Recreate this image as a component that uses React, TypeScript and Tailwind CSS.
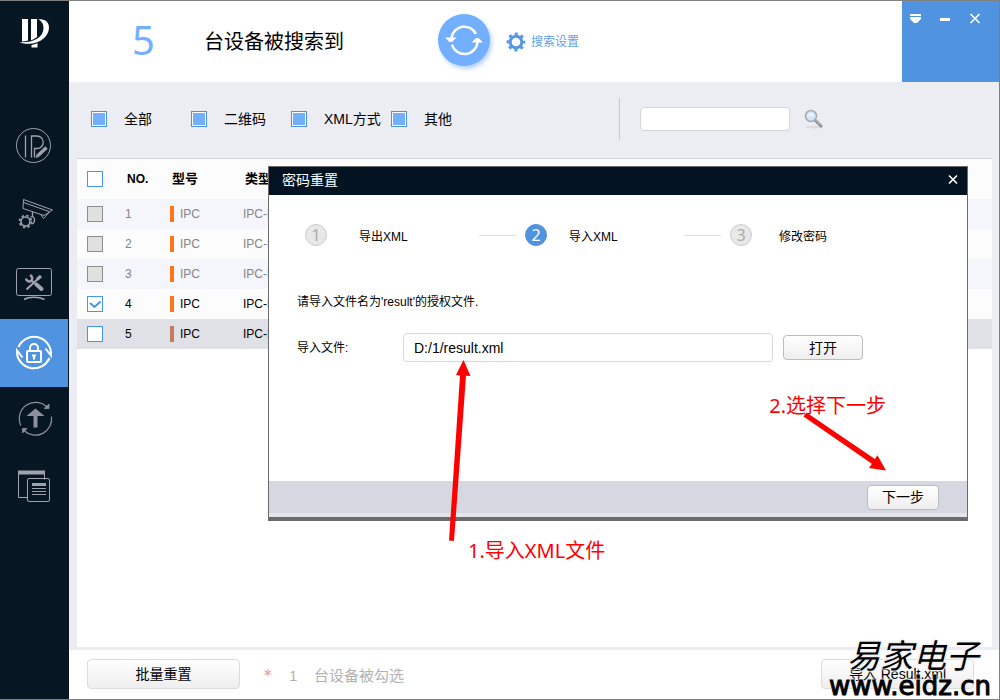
import { Fragment, type ReactNode } from 'react';

const filters = ['全部', '二维码', 'XML方式', '其他'];

const devices = [
  { no: 1, disabled: true, checked: false, row: 'bg-[#f5f6fb] text-[#858585]', bar: 'bg-[#ff7518]' },
  { no: 2, disabled: true, checked: false, row: 'bg-[#fcfcfc] text-[#858585]', bar: 'bg-[#ff7518]' },
  { no: 3, disabled: true, checked: false, row: 'bg-[#f5f6fb] text-[#858585]', bar: 'bg-[#ff7518]' },
  { no: 4, disabled: false, checked: true, row: 'bg-[#fcfcfc] text-black', bar: 'bg-[#ff7518]' },
  { no: 5, disabled: false, checked: false, row: 'bg-[#e0e1e7] text-black', bar: 'bg-[#c27b5c]' },
];

const steps = [
  { n: 1, label: '导出XML', active: false },
  { n: 2, label: '导入XML', active: true },
  { n: 3, label: '修改密码', active: false },
];

const buttonStyle =
  'border rounded bg-linear-to-b from-white to-[#eeeeee] text-sm leading-5 text-black flex items-center justify-center';

function Logo() {
  return (
    <svg className="w-[69px] h-[48px]" viewBox="0 0 69 48" fill="#fff">
      <path d="M22 18h6v21.500c-2 .6-4 .9-6 1z" />
      <path d="M31 18h6v18c-2 1.600-4 2.600-6 3.200z" />
      <path d="M38.500 18c7 .2 10.500 3 10.500 8.500 0 9-9 15.500-19 16.200-4 .2-7.500-.2-10.500-1.500 12 1 24-4 24-14.200 0-4-1.500-6.500-5-9z" />
      <path d="M31.500 44c2-.3 4-.9 6-1.800V46.500h-6z" />
    </svg>
  );
}

function IpEditIcon() {
  return (
    <svg className="size-[68px]" viewBox="0 0 68 68" fill="none" stroke="#a0a3ad">
      <circle cx="33.500" cy="30.500" r="17" />
      <path d="M25.500 20.500v22M31.500 42.500v-21.500h5.500a6 6 0 0 1 0 12.500h-2.500v9" strokeWidth="1.300" />
      <path d="M46.500 32.500L38 40.500" strokeWidth="3.400" />
      <path d="M36 42.500l.8-3 2 2.200z" fill="#a0a3ad" strokeWidth=".6" />
    </svg>
  );
}

function CameraIcon() {
  return (
    <svg className="size-[68px]" viewBox="0 0 68 68" fill="none" stroke="#a0a3ad">
      <path d="M23.500 16.500l29 10.500-8.500 5.500-21-7z" />
      <path d="M23.500 19.500L49 28.500M49 29.500l-5.500 6-2.500-3.500" />
      <path d="M32.500 29v5M30.500 34c2.500-1 4.500.8 4 3.500-.3 2.500-1.500 3.500-3 3.500" strokeWidth="1.300" />
      <circle cx="25.500" cy="38.500" r="4.500" strokeWidth="1.600" />
      <circle cx="25.500" cy="38.500" r="6" strokeWidth="1.600" strokeDasharray="2.400 2.312" />
    </svg>
  );
}

function ToolsIcon() {
  return (
    <svg className="size-[68px]" viewBox="0 0 68 68" fill="none" stroke="#a0a3ad">
      <rect x="16.500" y="17.500" width="35" height="27" rx="2" />
      <path d="M24 48.500c3-1.800 6-2.200 10-2.200s7 .4 10.500 2.200" strokeWidth="1.600" />
      <path d="M40.500 25.500L26.500 38.500" strokeWidth="2" />
      <path d="M41 25L37 28.500" strokeWidth="3" />
      <path d="M31 29l4.500 4" strokeWidth="2.200" />
      <path d="M36.500 33.500l5 4.500" strokeWidth="4" strokeLinecap="round" />
      <path d="M26 27.500c.5 3 3.500 3.800 5.500 2 1.500-1.600.8-4.200-1.500-5.300" strokeWidth="2.400" />
    </svg>
  );
}

function LockIcon() {
  return (
    <svg className="size-[68px]" viewBox="0 0 68 68" fill="none" stroke="#fff" strokeWidth="2">
      <path d="M18.500 28A17 17 0 0 1 51 33.500v3M51 33.500v3l-5.500-7M49.500 39A17 17 0 0 1 17 34.500v-3l5.500 7" />
      <rect x="27" y="32" width="14" height="11" rx="1" />
      <path d="M30 32v-3a4 4 0 0 1 8 0v3" />
      <path d="M32 36.500h4M34 36.500v4" />
    </svg>
  );
}

function UpgradeIcon() {
  return (
    <svg className="size-[68px]" viewBox="0 0 68 68" fill="none" stroke="#8d919d">
      <path d="M20.800 38.500A16.300 16.300 0 0 1 47 20M51.500 29.500A16.300 16.300 0 0 1 24 43.500" strokeWidth="1.200" />
      <path d="M49 17v4.500h-5zM22.500 41.500h4.500l-4.500 4.500z" fill="#8d919d" strokeWidth=".8" />
      <path d="M35.500 21.500l9 7.500h-7v11.500h-4V29h-7z" fill="#8d919d" stroke="none" />
    </svg>
  );
}

function ReportIcon() {
  return (
    <svg className="size-[68px]" viewBox="0 0 68 68" fill="none" stroke="#a0a3ad">
      <path d="M27 42.500h-8.500v-26h26v8" />
      <path d="M18 17.500h27" strokeWidth="4" />
      <rect x="27.500" y="23.500" width="22" height="23" rx="1.500" />
      <path d="M32 29.500h14" strokeWidth="3" />
      <path d="M32 33.500h14M32 36.500h14M32 39.500h14" />
    </svg>
  );
}

const navItems: { label: string; icon: ReactNode; active?: boolean }[] = [
  { label: 'ip', icon: <IpEditIcon /> },
  { label: 'device', icon: <CameraIcon /> },
  { label: 'system', icon: <ToolsIcon /> },
  { label: 'password', icon: <LockIcon />, active: true },
  { label: 'upgrade', icon: <UpgradeIcon /> },
  { label: 'report', icon: <ReportIcon /> },
];

function Sidebar() {
  return (
    <nav className="w-[69px] shrink-0 bg-[#071623]">
      <Logo />
      <div className="mt-[66px] flex flex-col">
        {navItems.map((item) => (
          <button key={item.label} aria-label={item.label} className={item.active ? 'w-[68px] bg-[#4f93e1]' : 'w-[68px]'}>
            {item.icon}
          </button>
        ))}
      </div>
    </nav>
  );
}

function Header() {
  return (
    <header className="flex h-[81px] bg-white">
      <div className="flex flex-1 items-center pb-1">
        <span className="ml-[63px] w-[72px] font-['Noto_Sans',sans-serif] text-[40px] leading-10 text-[#73afff]">5</span>
        <h1 className="w-[234px] pt-1 text-xl leading-6">台设备被搜索到</h1>
        <button aria-label="refresh" className="size-[52px] rounded-full bg-[#73afff] shadow-[2px_3px_4px_#b9d3f6]">
          <svg className="size-full" viewBox="1 1 52 52" fill="none" stroke="#fff" strokeWidth="2.500">
            <path d="M14.500 24.500A13 13 0 0 1 39 21M40.500 29A13 13 0 0 1 15 31.500" />
            <path d="M8 24.500h11.500l-4.500 4.500h-2.500zM46 29.500H34.500L39 25h2.500z" fill="#fff" stroke="none" />
          </svg>
        </button>
        <button className="ml-4 flex items-center gap-[5px] pt-1 text-xs leading-4 text-[#5f9fe8]">
          <svg className="size-5" viewBox="0 0 20 20" fill="none" stroke="#5797e3">
            <circle cx="10" cy="10" r="5.800" strokeWidth="3" />
            <circle cx="10" cy="10" r="8" strokeWidth="2.800" strokeDasharray="3.140 3.143" strokeDashoffset="1.570" />
          </svg>
          搜索设置
        </button>
      </div>
      <div className="flex w-[97px] items-start bg-[#4f93e1] pt-2 pl-1">
        <button aria-label="menu" className="size-5">
          <svg viewBox="0 0 20 20" fill="#fff"><path d="M4 5h11v2H4zM4 8h11v2l-4 4H8l-4-4z" /></svg>
        </button>
        <button aria-label="minimize" className="ml-2.5 size-5">
          <svg viewBox="0 0 20 20" fill="#fff"><path d="M4 9h10v3H4z" /></svg>
        </button>
        <button aria-label="close" className="ml-2.5 size-5">
          <svg viewBox="0 0 20 20" stroke="#fff" strokeWidth="1.700"><path d="M4.500 5l9 9M13.500 5l-9 9" /></svg>
        </button>
      </div>
    </header>
  );
}

function Filters() {
  return (
    <div className="flex h-[76px] items-center pb-0.5 pl-[22px]">
      {filters.map((name) => (
        <label key={name} className="flex w-[100px] items-center gap-[17px] text-sm leading-5 whitespace-nowrap">
          <input
            type="checkbox"
            defaultChecked
            className="size-4 shrink-0 appearance-none border border-[#4a92e2] bg-[#73afff] shadow-[inset_0_0_0_1px_white]"
          />
          {name}
        </label>
      ))}
      <div className="ml-32 h-[42px] w-px bg-[#c8c9d0]" />
      <input aria-label="search" className="ml-5 h-6 w-[150px] rounded border border-[#d4d5db] bg-white px-2 text-xs" />
      <button aria-label="find" className="ml-3">
        <svg className="size-6" viewBox="0 0 24 24" fill="none">
          <ellipse cx="12" cy="20" rx="9" ry="1.500" fill="#dcdde2" />
          <path d="M13.500 13.500l5.500 5.500" stroke="#8a8a8a" strokeWidth="3" strokeLinecap="round" />
          <path d="M13.500 13l5.500 5.500" stroke="#d6d6d6" strokeWidth="1" />
          <circle cx="9" cy="9" r="5.500" fill="#d3e7fa" stroke="#a5a9b0" strokeWidth="1.500" />
          <path d="M5.500 8.500a4 4 0 0 1 7 0z" fill="#f3f9ff" />
        </svg>
      </button>
    </div>
  );
}

function CheckBox({ label, checked, disabled }: { label: string; checked?: boolean; disabled?: boolean }) {
  return (
    <span className="ml-2.5 grid size-4">
      <input
        type="checkbox"
        aria-label={label}
        defaultChecked={checked}
        disabled={disabled}
        className="col-start-1 row-start-1 size-4 appearance-none border border-[#4298ee] bg-white disabled:border-[#8d8d8d] disabled:bg-[#e0e0e0]"
      />
      {checked && (
        <svg className="pointer-events-none col-start-1 row-start-1 size-4" viewBox="0 0 16 16" fill="none" stroke="#4a92e6" strokeWidth="2">
          <path d="M3 7l4.500 4L13.500 5.500" />
        </svg>
      )}
    </span>
  );
}

function DeviceTable() {
  return (
    <div className="mr-[7px] ml-2 flex-1 border-t border-[#d0d1d5] bg-white">
      <table className="w-full table-fixed text-left text-xs leading-5">
        <thead>
          <tr className="h-10 bg-[#fcfcfc] text-[13px]">
            <th className="w-12"><CheckBox label="all" /></th>
            <th className="w-[45px] pl-0.5 text-xs">NO.</th>
            <th className="w-[73px] pl-0.5">型号</th>
            <th className="pl-0.5">类型</th>
          </tr>
        </thead>
        <tbody>
          {devices.map((d) => (
            <tr key={d.no} className={`h-[30px] ${d.row}`}>
              <td><CheckBox label={`${d.no}`} checked={d.checked} disabled={d.disabled} /></td>
              <td>{d.no}</td>
              <td>
                <span className="flex items-center gap-1.5">
                  <span className={`h-4 w-1 ${d.bar}`} />
                  IPC
                </span>
              </td>
              <td>IPC-HFW</td>
            </tr>
          ))}
        </tbody>
      </table>
    </div>
  );
}

function Footer() {
  return (
    <footer className="mt-[3px] flex h-[49px] items-center bg-white pr-[25px] pb-0.5 pl-[18px]">
      <button className={`${buttonStyle} h-[30px] w-[153px] border-[#dcdcdc]`}>批量重置</button>
      <p className="ml-6 flex items-center pt-1 text-[15px] leading-5 text-[#b2b2b2]">
        <span className="w-[25px] font-['DejaVu_Sans',sans-serif] text-[#ff8a8a]">*</span>
        <span className="w-[25px]">1</span>
        台设备被勾选
      </p>
      <button className={`${buttonStyle} ml-auto h-[30px] w-[153px] border-[#dcdcdc]`}>导入 Result.xml</button>
    </footer>
  );
}

function ResetDialog() {
  return (
    <section
      role="dialog"
      aria-label="密码重置"
      className="absolute top-[165px] right-[31px] left-[268px] border border-b-4 border-[#6b6b6b] bg-white"
    >
      <div className="flex h-7 items-center bg-[#041321] pr-1 pb-0.5 pl-[13px] text-sm leading-5 text-white">
        <h2>密码重置</h2>
        <button aria-label="close dialog" className="ml-auto size-5">
          <svg viewBox="0 0 20 20" stroke="#fff" strokeWidth="1.600"><path d="M6 5.500l8 8M14 5.500l-8 8" /></svg>
        </button>
      </div>
      <div className="h-[286px] px-7">
        {/* number and label columns alternate */}
        <div className="grid grid-cols-[54px_166px_44px_161px_49px_1fr] items-center pt-[29px] pl-2">
          {steps.map((s) => (
            <Fragment key={s.n}>
              <span
                className={`flex size-[22px] items-center justify-center rounded-full border font-['Noto_Sans',sans-serif] text-base leading-5 ${
                  s.active ? 'border-[#4f93e1] bg-[#4f93e1] text-white' : 'border-[#cccccc] bg-[#e8e8e8] text-[#acacac]'
                }`}
              >
                {s.n}
              </span>
              <span className="flex items-center">
                <span className="pt-1 text-xs leading-4">{s.label}</span>
                {s.n < 3 && <span className="mr-[9px] ml-auto h-px w-[37px] bg-[#dedede]" />}
              </span>
            </Fragment>
          ))}
        </div>
        <p className="mt-12 text-xs leading-4">请导入文件名为'result'的授权文件.</p>
        <div className="mt-[23px] flex items-center">
          <label htmlFor="file" className="w-[106px] text-xs leading-4">导入文件:</label>
          <input
            id="file"
            defaultValue="D:/1/result.xml"
            className="h-[29px] flex-1 rounded border border-[#d6d7dd] px-2.5 text-sm"
          />
          <button className={`${buttonStyle} mr-[76px] ml-2.5 h-[25px] w-20 border-[#bcbcbc]`}>打开</button>
        </div>
      </div>
      <div className="flex h-9 items-center border-b-4 border-[#e4e5e9] bg-[#d5d8e0] pr-7">
        <button className={`${buttonStyle} ml-auto h-[25px] w-[72px] border-[#bcbcbc]`}>下一步</button>
      </div>
    </section>
  );
}

function Annotations() {
  return (
    <div className="pointer-events-none font-['Noto_Sans','Noto_Sans_CJK_SC',sans-serif] text-xl leading-6 text-[#ff0000]">
      <svg className="absolute top-[358px] left-[444px] h-[184px] w-8" viewBox="0 0 32 184" fill="#f00">
        <path d="M5 181.500L16 16.500l-4-.5L19.500 1 26.500 17l-4.500-.3L10 182z" />
      </svg>
      <p className="absolute top-[538px] left-[468px]">1.导入XML文件</p>
      <p className="absolute top-[393px] right-[113px]">2.选择下一步</p>
      <svg className="absolute top-[408px] right-[99px] h-16 w-[99px]" viewBox="0 0 99 64" fill="#f00">
        <path d="M5.500 3.500L73.900 50l2.500-3.800L85 61.500l-17-2.500 2.900-4.200L2.500 7.500z" />
      </svg>
    </div>
  );
}

function Watermark() {
  return (
    <div className="pointer-events-none absolute right-2 bottom-0 text-black [text-shadow:0_0_3px_#eee,0_0_3px_#eee,0_0_3px_#eee,0_0_2px_#eee]">
      <p className="ml-[18px] text-[33px] leading-8 italic">易家电子</p>
      <p className="font-['DejaVu_Sans',sans-serif] text-[26px] leading-[26px] [-webkit-text-stroke:1px_black]">www.eidz.cn</p>
    </div>
  );
}

export default function App() {
  return (
    <div className="relative flex min-h-screen border-t border-r border-b border-[#808080] bg-[#ecedf3] font-['Liberation_Sans','Noto_Sans_CJK_SC',sans-serif] text-black">
      <Sidebar />
      <main className="flex flex-1 flex-col">
        <Header />
        <Filters />
        <DeviceTable />
        <Footer />
      </main>
      <ResetDialog />
      <Annotations />
      <Watermark />
    </div>
  );
}
